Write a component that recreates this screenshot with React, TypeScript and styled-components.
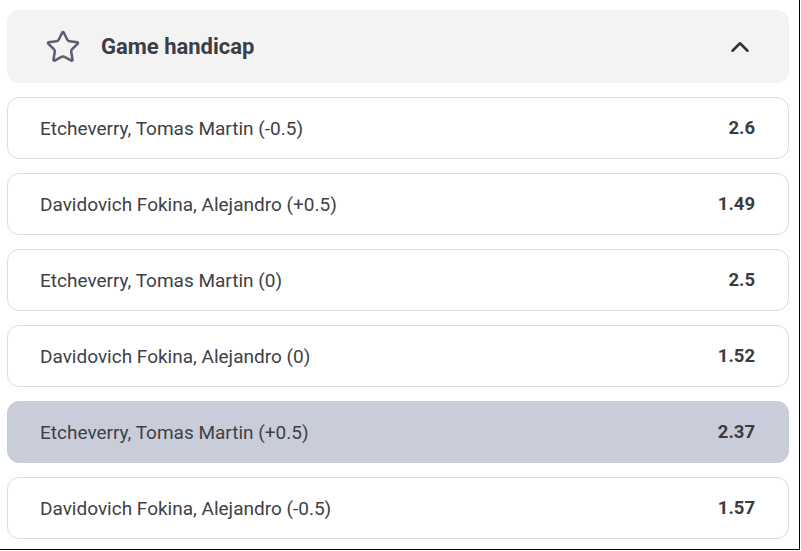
import React from "react";
import styled, { createGlobalStyle } from "styled-components";
import { Star, ChevronUp } from "lucide-react";

const Global = createGlobalStyle`
  html, body { margin: 0; padding: 0; background: #fff; }
  body { font-family: Roboto, "Noto Sans", sans-serif; }
`;

const Frame = styled.div`
  width: 800px;
  height: 550px;
  box-sizing: border-box;
  border-right: 1px solid #000;
  border-bottom: 1px solid #000;
  padding: 10px 10px 0 7px;
  display: flex;
  flex-direction: column;
  gap: 14px;
`;

const Header = styled.div`
  height: 73px;
  background: #f3f3f4;
  border-radius: 12px;
  display: flex;
  align-items: center;
  padding: 0 34px 0 38px;
`;

const StarIcon = styled(Star)`
  color: #5b6070;
  flex: none;
`;

const Title = styled.div`
  margin-left: 20px;
  font-size: 22px;
  font-weight: 700;
  color: #3b3e45;
  flex: 1;
`;

const Chevron = styled(ChevronUp)`
  color: #2f3136;
  flex: none;
`;

const List = styled.div`
  display: flex;
  flex-direction: column;
  gap: 14px;
`;

const Row = styled.div<{ $active?: boolean }>`
  height: 62px;
  box-sizing: border-box;
  border-radius: 12px;
  border: 1px solid ${(p) => (p.$active ? "#c9cdd9" : "#dcdcdf")};
  background: ${(p) => (p.$active ? "#c9cdd9" : "#fff")};
  display: flex;
  align-items: center;
  justify-content: space-between;
  padding: 0 33px 0 32px;
  font-size: 19px;
  color: #404146;
`;

const Name = styled.span``;

const Odds = styled.span`
  font-weight: 700;
  font-size: 18.5px;
  color: #3a3c42;
`;

const rows = [
  { name: "Etcheverry, Tomas Martin (-0.5)", odds: "2.6" },
  { name: "Davidovich Fokina, Alejandro (+0.5)", odds: "1.49" },
  { name: "Etcheverry, Tomas Martin (0)", odds: "2.5" },
  { name: "Davidovich Fokina, Alejandro (0)", odds: "1.52" },
  { name: "Etcheverry, Tomas Martin (+0.5)", odds: "2.37", active: true },
  { name: "Davidovich Fokina, Alejandro (-0.5)", odds: "1.57" },
];

export default function App() {
  return (
    <>
      <Global />
      <Frame>
        <Header>
          <StarIcon size={36} strokeWidth={1.7} />
          <Title>Game handicap</Title>
          <Chevron size={30} strokeWidth={2} />
        </Header>
        <List>
          {rows.map((r, i) => (
            <Row key={i} $active={r.active}>
              <Name>{r.name}</Name>
              <Odds>{r.odds}</Odds>
            </Row>
          ))}
        </List>
      </Frame>
    </>
  );
}
